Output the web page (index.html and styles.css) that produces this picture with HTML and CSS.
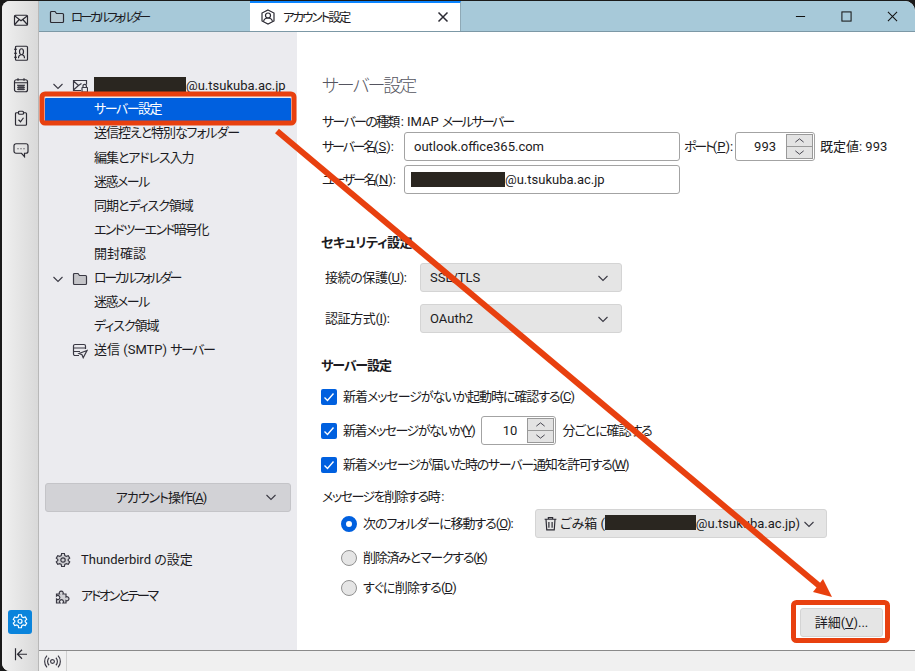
FILE: index.html
```html
<!DOCTYPE html>
<html lang="ja">
<head>
<meta charset="utf-8">
<title>アカウント設定</title>
<link rel="stylesheet" href="styles.css">
</head>
<body>
<div class="window">
  <nav class="spaces">
    <div class="space-top">
      <svg class="sp-icon" viewBox="0 0 16 16"><rect x="1.500" y="3" width="13" height="10" rx="1"/><path d="M1.500 3.500 8 8.500l6.500-5M1.500 12.500 6 7.500M14.500 12.500 10 7.500"/></svg>
      <svg class="sp-icon" viewBox="0 0 16 16"><rect x="2.500" y="1" width="12" height="14" rx="1"/><path d="M1 4h3M1 8h3M1 12h3M5.500 13c0-2.500 1-3.500 3-3.500s3 1 3 3.500M8.500 9.500c-1.200 0-2-1-2-3s.8-3 2-3 2 1 2 3-.8 3-2 3z"/></svg>
      <svg class="sp-icon" viewBox="0 0 16 16"><rect x="1.500" y="2.500" width="13" height="12" rx="2"/><path d="M1.500 5.500h13M5 1v2.500M11 1v2.500M4 8h8M4 10h8M4 12h8M6 7.500v5.500M8 7.500v5.500M10 7.500v5.500"/></svg>
      <svg class="sp-icon" viewBox="0 0 16 16"><rect x="2.500" y="2.500" width="11" height="12.500" rx="1"/><rect class="sp-fill" x="5.500" y="1" width="5" height="3" rx="1"/><path d="m5.500 9.500 2 2 3-4"/></svg>
      <svg class="sp-icon" viewBox="0 0 16 16"><path d="M3 1.500h10a2 2 0 0 1 2 2v5.500a2 2 0 0 1-2 2h-1.500v3.500L8.500 11H3a2 2 0 0 1-2-2V3.500a2 2 0 0 1 2-2z"/><path d="M4.500 6.500h1M7.500 6.500h1M10.500 6.500h1"/></svg>
    </div>
    <div class="space-bottom">
      <div class="gear-btn">
        <svg class="sp-icon sp-white" viewBox="0 0 16 16"><path d="M6.600 1.500h2.800l.4 2 1.500.9 2-.7 1.400 2.400-1.500 1.300v1.200l1.500 1.300-1.400 2.400-2-.7-1.500.9-.4 2H6.600l-.4-2-1.500-.9-2 .7L1.300 9.900l1.500-1.300V7.400L1.300 6.100l1.400-2.400 2 .7 1.500-.9z"/><circle cx="8" cy="8" r="2"/></svg>
      </div>
      <svg class="sp-icon sp-collapse" viewBox="0 0 16 16"><path d="M2.500 2v12M14 8H4.500M9 3.500 4.500 8 9 12.500"/></svg>
    </div>
  </nav>
  <div class="main">
    <header class="tabbar">
      <div class="tab">
        <svg class="tab-icon" viewBox="0 0 16 16"><path class="folder" d="M1.500 12.500v-9a1 1 0 0 1 1-1h3.500l1.500 2h6a1 1 0 0 1 1 1v7a1 1 0 0 1-1 1h-11a1 1 0 0 1-1-1z"/></svg>
        <span class="tab-k">ローカルフォルダー</span>
      </div>
      <div class="tab tab-active">
        <svg class="tab-icon" viewBox="0 0 16 16"><path d="m8 1 6 3v8l-6 3-6-3V4z"/><circle cx="8" cy="6.500" r="2.500"/><path d="M3.500 12.500c.5-2.500 2-3.500 4.500-3.500s4 1 4.500 3.500"/></svg>
        <span class="tab-title tab-t">アカウント設定</span>
        <svg class="tab-close" viewBox="0 0 12 12"><path d="m1.500 1.500 9 9M10.500 1.500l-9 9"/></svg>
      </div>
      <div class="win-controls">
        <svg class="win-btn" viewBox="0 0 12 12"><path d="M1 6h10"/></svg>
        <svg class="win-btn" viewBox="0 0 12 12"><rect x="1" y="1" width="10" height="10"/></svg>
        <svg class="win-btn" viewBox="0 0 12 12"><path d="m1 1 10 10M11 1 1 11"/></svg>
      </div>
    </header>
    <div class="content">
      <aside class="sidebar">
        <ul class="tree">
          <li class="row">
            <svg class="chev" viewBox="0 0 12 12"><path d="m1.500 4 4.500 4.500L10.500 4"/></svg>
            <svg class="row-icon" viewBox="0 0 16 16"><path d="M9 12.500H1.500v-10h13v4M1.500 3 6.500 7.500 1.500 12M6.500 7.500l3-2"/><rect class="lock" x="10" y="9.500" width="5.500" height="4.500" rx=".5"/><path d="M11 9.500V8a1.700 1.700 0 0 1 3.400 0v1.500"/></svg>
            <span class="acct"><span class="redact redact-a"></span>@u.tsukuba.ac.jp</span>
          </li>
          <li class="row row-sel"><span class="k5">サーバー設定</span></li>
          <li class="row"><span class="k3">送信控えと特別なフォルダー</span></li>
          <li class="row"><span class="k3">編集とアドレス入力</span></li>
          <li class="row"><span class="k5">迷惑メール</span></li>
          <li class="row"><span class="k3">同期とディスク領域</span></li>
          <li class="row"><span class="k6">エンドツーエンド暗号化</span></li>
          <li class="row"><span>開封確認</span></li>
          <li class="row">
            <svg class="chev" viewBox="0 0 12 12"><path d="m1.500 4 4.500 4.500L10.500 4"/></svg>
            <svg class="row-icon" viewBox="0 0 16 16"><path class="folder-fill" d="M1.500 12.500v-9a1 1 0 0 1 1-1h3.500l1.500 2h6a1 1 0 0 1 1 1v7a1 1 0 0 1-1 1h-11a1 1 0 0 1-1-1z"/></svg>
            <span class="k9">ローカルフォルダー</span>
          </li>
          <li class="row"><span class="k5">迷惑メール</span></li>
          <li class="row"><span class="k3">ディスク領域</span></li>
          <li class="row">
            <svg class="row-icon" viewBox="0 0 16 16"><path d="M7 12.500H3a1.500 1.500 0 0 1-1.500-1.500V3A1.500 1.500 0 0 1 3 1.500h9A1.500 1.500 0 0 1 13.500 3v3M2 5h11M2 8.500h6"/><path class="send" d="m15 7.500-8 3 3 1.200 1.200 3z"/></svg>
            <span>送信 (SMTP) <span class="k5">サーバー</span></span>
          </li>
        </ul>
        <button class="acct-btn" type="button">
          <span class="k3">アカウント操作(<u>A</u>)</span>
          <svg class="chev chev-abs" viewBox="0 0 12 12"><path d="m1.500 4 4.500 4.500L10.500 4"/></svg>
        </button>
        <div class="side-link">
          <svg class="link-icon" viewBox="0 0 16 16"><path d="M6.600 1.500h2.800l.4 2 1.500.9 2-.7 1.400 2.400-1.500 1.300v1.200l1.500 1.300-1.400 2.400-2-.7-1.500.9-.4 2H6.600l-.4-2-1.500-.9-2 .7L1.300 9.900l1.500-1.300V7.400L1.300 6.100l1.400-2.400 2 .7 1.500-.9z"/><circle cx="8" cy="8" r="2.200"/></svg>
          <span>Thunderbird の設定</span>
        </div>
        <div class="side-link">
          <svg class="link-icon" viewBox="0 0 16 16"><path d="M1.500 6h3a2 2 0 1 1 3.500 0h3v3a2 2 0 1 1 0 3.500v2.500H8a2 2 0 1 0-3 0H1.500v-4a2 2 0 1 0 0-3z"/></svg>
          <span class="k8">アドオンとテーマ</span>
        </div>
      </aside>
      <section class="panel">
        <h1 class="title k5t">サーバー設定</h1>
        <div class="type-line"><span class="k6">サーバーの種類</span><span class="colon">:</span> IMAP <span class="k8">メールサーバー</span></div>
        <div class="line server-line">
          <label class="lbl-server"><span class="k8">サーバー名</span>(<u>S</u>):</label>
          <div class="input input-wide input-host">outlook.office365.com</div>
          <label class="lbl-port"><span class="k8">ポート</span>(<u>P</u>):</label>
          <div class="input spin spin-port"><span class="num">993</span>
            <div class="spinbtns">
              <svg viewBox="0 0 12 6"><path d="m1 5 5-4 5 4"/></svg>
              <svg viewBox="0 0 12 6"><path d="m1 1 5 4 5-4"/></svg>
            </div>
          </div>
          <span class="default">既定値: 993</span>
        </div>
        <div class="line user-line">
          <label class="lbl-server"><span class="k8">ユーザー名</span>(<u>N</u>):</label>
          <div class="input input-wide input-user"><span class="redact redact-b"></span>@u.tsukuba.ac.jp</div>
        </div>
        <h2 class="subhead sec-head"><span class="k1">セキュリティ設定</span></h2>
        <div class="line sel-line first-sel">
          <label class="lbl-sec">接続の保護(<u>U</u>):</label>
          <div class="select sel-sec"><span>SSL/TLS</span><svg class="chev" viewBox="0 0 12 12"><path d="m1.500 4 4.500 4.500L10.500 4"/></svg></div>
        </div>
        <div class="line sel-line second-sel">
          <label class="lbl-sec">認証方式(<u>I</u>):</label>
          <div class="select sel-sec"><span>OAuth2</span><svg class="chev" viewBox="0 0 12 12"><path d="m1.500 4 4.500 4.500L10.500 4"/></svg></div>
        </div>
        <h2 class="subhead srv-head"><span class="k3">サーバー設定</span></h2>
        <div class="line check-line c1">
          <span class="check"><svg viewBox="0 0 16 16"><path d="m3.500 8.500 3 3 6-7"/></svg></span>
          <span class="k3">新着メッセージがないか起動時に確認する(<u>C</u>)</span>
        </div>
        <div class="line check-line c2">
          <span class="check"><svg viewBox="0 0 16 16"><path d="m3.500 8.500 3 3 6-7"/></svg></span>
          <span class="k5">新着メッセージがないか(<u>Y</u>)</span>
          <div class="input spin spin-min"><span class="num">10</span>
            <div class="spinbtns">
              <svg viewBox="0 0 12 6"><path d="m1 5 5-4 5 4"/></svg>
              <svg viewBox="0 0 12 6"><path d="m1 1 5 4 5-4"/></svg>
            </div>
          </div>
          <span class="k3">分ごとに確認する</span>
        </div>
        <div class="line check-line c3">
          <span class="check"><svg viewBox="0 0 16 16"><path d="m3.500 8.500 3 3 6-7"/></svg></span>
          <span class="k4">新着メッセージが届いた時のサーバー通知を許可する(<u>W</u>)</span>
        </div>
        <div class="line del-label"><span class="k5">メッセージを削除する時</span><span class="colon">:</span></div>
        <div class="line radio-line r1">
          <span class="radio radio-on"></span>
          <span class="radio-text k3">次のフォルダーに移動する(<u>O</u>):</span>
          <div class="select sel-trash">
            <svg class="trash" viewBox="0 0 14 14"><path d="M1.500 3h11M5 3V1.500h4V3M2.800 3l.7 10h7l.7-10M5.500 5.500v5.500M8.500 5.500v5.500"/></svg>
            <span>ごみ箱 (<span class="redact redact-c"></span>@u.tsukuba.ac.jp)</span>
            <svg class="chev" viewBox="0 0 12 12"><path d="m1.500 4 4.500 4.500L10.500 4"/></svg>
          </div>
        </div>
        <div class="line radio-line r2">
          <span class="radio"></span>
          <span class="k4">削除済みとマークする(<u>K</u>)</span>
        </div>
        <div class="line radio-line r3">
          <span class="radio"></span>
          <span class="k2">すぐに削除する(<u>D</u>)</span>
        </div>
        <div class="btn-wrap"><button class="detail-btn" type="button">詳細(<u>V</u>)...</button></div>
      </section>
    </div>
    <footer class="status">
      <div class="status-cell">
        <svg class="status-icon" viewBox="0 0 16 16"><circle cx="8" cy="8" r="1.800"/><path d="M4.800 4.500a5 5 0 0 0 0 7M11.200 4.500a5 5 0 0 1 0 7M2.800 2.500a8 8 0 0 0 0 11M13.200 2.500a8 8 0 0 1 0 11"/></svg>
      </div>
    </footer>
  </div>
  <svg class="annot" viewBox="0 0 915 671">
    <rect class="annot-box" x="42" y="94" width="252" height="29" rx="3"/>
    <rect class="annot-box" x="793.500" y="602.500" width="94" height="38" rx="3"/>
    <path class="annot-line" d="M277 131 823 589"/>
    <path class="annot-head" d="m832 597-19-5 10-13z"/>
  </svg>
</div>
</body>
</html>
```

FILE: styles.css
```css
* { box-sizing: border-box; }
html, body { margin: 0; height: 100%; background: #1a1a1a; overflow: hidden; }
body {
  font-family: Roboto, "Noto Sans CJK JP", sans-serif;
  font-feature-settings: "palt", "kern";
  font-size: 13px;
  line-height: 16px;
  color: #1c1b22;
  white-space: nowrap;
}
.k1 { letter-spacing: -0.400px; }
.k2 { letter-spacing: -0.800px; }
.k3 { letter-spacing: -1.050px; }
.k4 { letter-spacing: -1.250px; }
.k5 { letter-spacing: -1.500px; }
.k6 { letter-spacing: -1.700px; }
.k8 { letter-spacing: -2.200px; }
.k9 { letter-spacing: -2.400px; }
.k5t { letter-spacing: -2px; }
.tab-k { letter-spacing: -2.900px; }
.tab-t { letter-spacing: -2px; }
.colon { margin-left: 2px; }
.window {
  position: relative;
  display: flex;
  height: 670px;
  margin: 1px 0 0 2px;
  width: calc(100% - 2px);
  border-radius: 8px 10px 0 8px;
  overflow: hidden;
  background: #fff;
}
.spaces {
  flex: 0 0 37px;
  display: flex;
  flex-direction: column;
  justify-content: space-between;
  background: linear-gradient(to right, #f0f0f0, #d9d9d9);
  border-right: 1px solid #b8b8b8;
  padding-left: 6px;
}
.space-top { display: flex; flex-direction: column; gap: 16px; padding: 11px 0 0 5px; }
.space-bottom { display: flex; flex-direction: column; align-items: flex-start; padding-bottom: 9px; }
.sp-icon { width: 16px; height: 16.500px; fill: none; stroke: #2b2a33; stroke-width: 1.200; display: block; }
.sp-fill { fill: #e6e6e6; }
.sp-white { stroke: #fff; }
.sp-collapse { margin: 12px 0 0 5px; }
.gear-btn { width: 24px; height: 24px; background: #0a84dc; border-radius: 3px; display: flex; align-items: center; justify-content: center; }
.main { flex: 1; min-width: 0; display: flex; flex-direction: column; }
.tabbar {
  flex: 0 0 30px;
  display: flex;
  align-items: stretch;
  background: #a7c9d9;
  border-bottom: 1px solid #7c98a6;
}
.tab { width: 211px; display: flex; align-items: center; padding-left: 10px; gap: 6px; font-size: 12.500px; border-top: 2px solid transparent; }
.tab > span { padding-top: 1px; }
.tab-icon { width: 16px; height: 16px; fill: none; stroke: #2b2a33; stroke-width: 1.200; }
.folder { fill: #b5c8d2; }
.tab-active {
  width: 211px;
  background: #fff;
  border-top: 2px solid #0a84ff;
  border-right: 1px solid #8fa9b6;
  height: 30px;
  position: relative;
  z-index: 1;
  gap: 7px;
}
.tab-title { flex: 1; }
.tab-close { width: 12px; height: 12px; margin-right: 11px; fill: none; stroke: #2b2a33; stroke-width: 1.500; }
.win-controls { margin-left: auto; display: flex; align-items: center; gap: 35px; padding-right: 17px; }
.win-btn { width: 11px; height: 11px; fill: none; stroke: #111; stroke-width: 1.100; display: block; }
.content { flex: 1; min-height: 0; display: flex; }
.sidebar {
  flex: 0 0 258px;
  background: #ebebef;
  display: flex;
  flex-direction: column;
  padding: 42px 6px 36px;
}
.tree { list-style: none; margin: 0; padding: 0; flex: 1; }
.row { height: 24.100px; display: flex; align-items: center; padding: 0 0 1.500px 49px; position: relative; }
.row .chev { position: absolute; left: 7px; top: 6px; }
.row .row-icon { position: absolute; left: 27px; top: 4px; }
.row-sel { background: #0060df; color: #fff; border-radius: 1px; }
.chev { width: 12px; height: 12px; fill: none; stroke: #3a3944; stroke-width: 1.100; flex: none; }
.row-icon { width: 16px; height: 16px; fill: none; stroke: #3a3944; stroke-width: 1.200; }
.lock { fill: #ebebef; }
.folder-fill { fill: #c4c4c8; }
.send { fill: #ebebef; }
.redact { display: inline-block; background: #2a2620; height: 15px; vertical-align: -2.500px; }
.redact-a { width: 92px; }
.redact-b { width: 94px; }
.redact-c { width: 91px; }
.acct-btn {
  position: relative;
  height: 29px;
  margin: 0 0 30px;
  font: inherit;
  color: inherit;
  background: #d2d2d6;
  border: 1px solid #c4c4c8;
  border-radius: 3px;
  padding: 0 14px 0 0;
}
.chev-abs { position: absolute; right: 13px; top: 7px; }
.side-link { height: 36px; display: flex; align-items: center; gap: 10px; padding-left: 10px; }
.link-icon { width: 16px; height: 16px; fill: #d0d0d4; stroke: #3a3944; stroke-width: 1.200; flex: none; }
.panel { flex: 1; min-width: 0; padding: 42px 32px 0 25px; background: #fff; }
.title { margin: 0; height: 24px; line-height: 24px; font-size: 18px; font-weight: 300; color: #555560; }
.line { display: flex; align-items: center; }
.type-line { margin-top: 15px; height: 18px; line-height: 18px; }
.server-line { margin-top: 1px; height: 29px; }
.user-line { margin-top: 4px; height: 29px; }
.lbl-server { width: 82px; flex: none; }
.input {
  height: 29px;
  border: 1px solid #a3a3a3;
  border-radius: 3px;
  background: #fff;
  display: flex;
  align-items: center;
  flex: none;
}
.input-wide { width: 276px; }
.input-host { padding-left: 9px; }
.input-user { padding-left: 6px; }
.lbl-port { width: 55px; flex: none; padding-left: 4px; }
.spin { position: relative; justify-content: flex-end; padding: 0 1px 0 0; }
.spin-port { width: 80px; }
.spin-min { width: 75px; margin-left: 1px; }
.num { flex: 1; text-align: right; padding-right: 10px; }
.spinbtns { width: 27px; height: 25px; display: flex; flex-direction: column; background: #e3e3e3; border: 1px solid #999; }
.spinbtns svg { flex: 1; min-height: 0; width: 100%; padding: 3px 0; fill: none; stroke: #3a3944; stroke-width: 1.100; }
.spinbtns svg:first-child { border-bottom: 1px solid #999; }
.default { margin-left: 5px; }
.subhead { margin: 0 0 0 -1px; height: 20px; line-height: 20px; font-size: 13px; font-weight: 700; }
.sec-head { margin-top: 39px; }
.srv-head { margin-top: 23px; }
.lbl-sec { width: 98px; padding-left: 3px; flex: none; letter-spacing: -0.400px; }
.select {
  height: 29px;
  background: #e5e5e5;
  border: 1px solid #d4d4d4;
  border-radius: 3px;
  display: flex;
  align-items: center;
  justify-content: space-between;
  padding: 0 12px 0 9px;
  flex: none;
}
.first-sel { margin-top: 10px; }
.second-sel { margin-top: 12px; }
.sel-sec { width: 202px; }
.check-line { gap: 6px; margin-left: -1px; }
.c1 { margin-top: 11px; height: 20px; }
.c2 { margin-top: 9px; height: 29px; }
.c3 { margin-top: 10px; height: 20px; }
.check { width: 16px; height: 16px; background: #0060df; border-radius: 2px; flex: none; display: block; }
.check svg { display: block; width: 16px; height: 16px; fill: none; stroke: #fff; stroke-width: 1.400; }
.del-label { margin-top: 13px; height: 18px; }
.radio-line { margin-left: 19px; }
.r1 { margin-top: 3px; height: 29px; }
.r2 { margin-top: 10px; height: 20px; }
.r3 { margin-top: 10px; height: 20px; }
.radio { width: 16px; height: 16px; border-radius: 50%; border: 1px solid #919191; background: #e5e5e5; margin-right: 6px; flex: none; }
.radio-on { border: 5px solid #0060df; background: #fff; }
.radio-text { width: 172px; flex: none; }
.sel-trash { width: 292px; padding: 0 11px 0 7px; }
.trash { width: 15px; height: 15px; fill: none; stroke: #2b2a33; stroke-width: 1.100; flex: none; margin-right: 2px; }
.sel-trash > span { flex: 1; }
.btn-wrap { margin-top: 10px; display: flex; justify-content: flex-end; }
.detail-btn { width: 83px; height: 29px; font: inherit; color: inherit; background: #e5e5e5; border: 1px solid #d4d4d4; border-radius: 3px; padding: 0; }
.status { flex: 0 0 21px; background: #f0f0f0; border-top: 1px solid #8a8a8a; display: flex; }
.status-cell { width: 28px; border-right: 1px solid #d0d0d0; display: flex; align-items: center; justify-content: center; }
.status-icon { width: 17px; height: 17px; fill: none; stroke: #3a3944; stroke-width: 1.100; }
.annot { position: absolute; left: -2px; top: -1px; width: 915px; height: 671px; pointer-events: none; z-index: 5; }
.annot-box { fill: none; stroke: #e8400f; stroke-width: 5; }
.annot-line { fill: none; stroke: #e8400f; stroke-width: 6; }
.annot-head { fill: #e8400f; }
```
